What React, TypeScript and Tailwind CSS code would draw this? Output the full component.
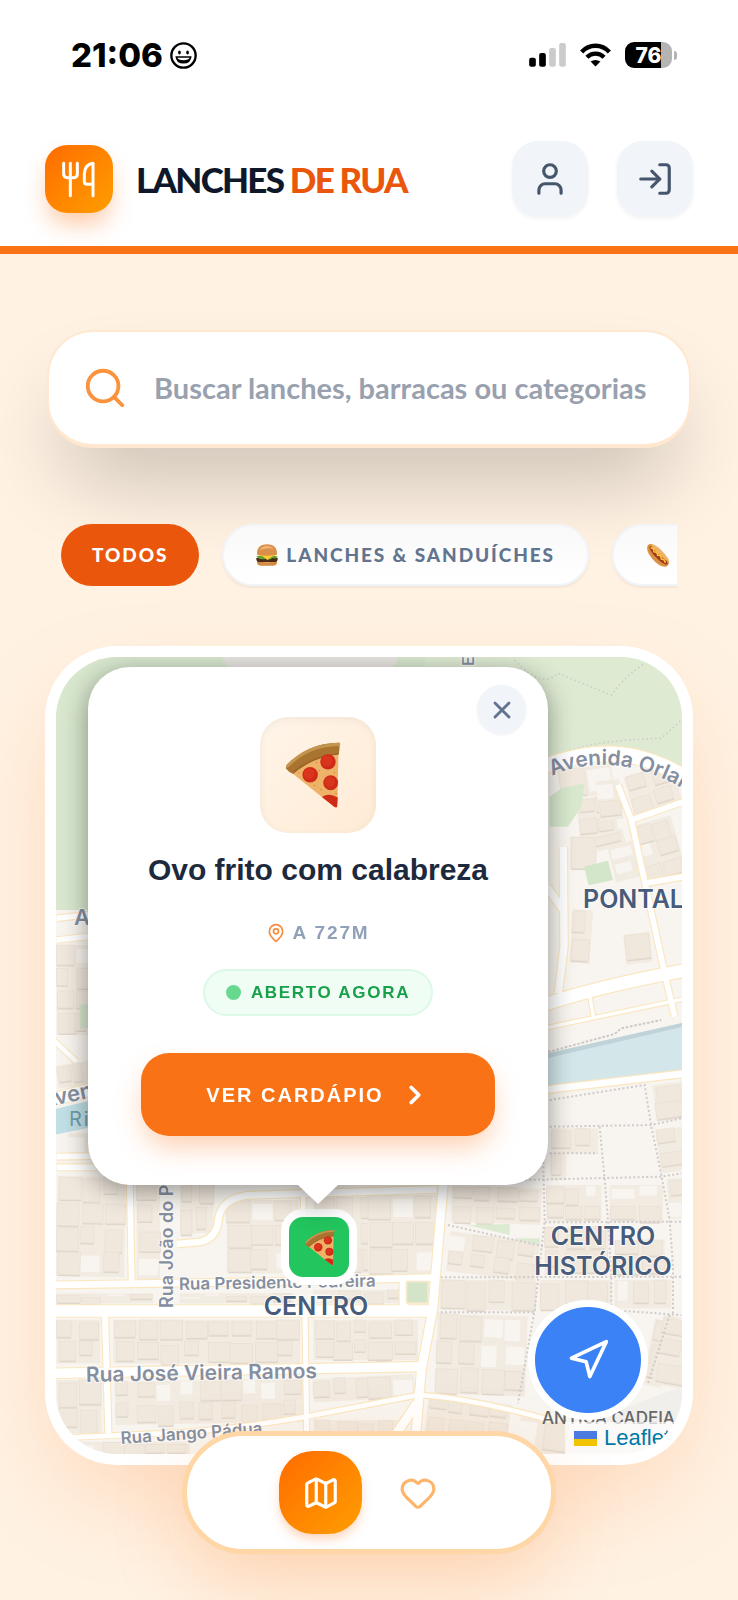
import { ChevronRight, Heart, LogIn, Map as MapIcon, MapPin, Navigation, Search, User, X } from 'lucide-react';

const categories = [
  { label: 'Todos', active: true },
  { label: 'Lanches & Sanduíches', icon: <Burger /> },
  { label: 'Hot Dogs', icon: <HotDog /> },
];

function Pizza({ className }: { className: string }) {
  return (
    <svg viewBox="136 188 168 202" className={className} aria-hidden="true">
      <path d="M160 284 Q216 232 297 222 L294 384 Q288 388 281 381 Z" fill="#eeb268" />
      <path d="M140 268 Q202 192 300 193 Q302 208 298 228 Q220 236 163 286 Q148 280 140 268Z" fill="#a8742f" />
      <path d="M146 262 Q206 200 298 198" fill="none" stroke="#c4954f" strokeWidth="9" strokeLinecap="round" />
      <path d="M164 280 Q220 234 297 226" fill="none" stroke="#9a5c28" strokeWidth="3" />
      <g fill="#cf2a17">
        <circle cx="266" cy="250" r="23" />
        <circle cx="213" cy="288" r="23" />
        <circle cx="274" cy="312" r="22" />
        <path d="M248 354 Q270 340 295 356 L293 383 Q288 387 282 381Z" />
      </g>
      <g fill="#d9351d">
        <circle cx="263" cy="247" r="16" />
        <circle cx="210" cy="285" r="16" />
        <circle cx="272" cy="309" r="15" />
      </g>
      <g fill="#c98238">
        <circle cx="232" cy="252" r="2" />
        <circle cx="240" cy="276" r="2" />
        <circle cx="226" cy="320" r="2" />
        <circle cx="246" cy="332" r="2" />
        <circle cx="180" cy="282" r="2" />
        <circle cx="285" cy="282" r="2" />
        <circle cx="290" cy="344" r="2" />
      </g>
    </svg>
  );
}

function Burger() {
  return (
    <svg viewBox="0 0 66 66" className="size-[22px] shrink-0" aria-hidden="true">
      <path d="M3 50 Q33 60 63 50 V56 Q62 65 50 65 H16 Q4 65 3 56Z" fill="#d48a3f" />
      <path d="M1 42 Q33 36 65 42 Q66 52 58 54 H8 Q0 52 1 42Z" fill="#4b2a18" />
      <path d="M1 38 Q10 33 33 34 T65 38 Q60 46 50 42 Q40 50 30 44 Q14 50 1 38Z" fill="#5fa02e" />
      <path d="M3 32 H63 L48 38 L34 48 L22 38Z" fill="#ffcc2e" />
      <path d="M3 32 Q1 2 33 1 Q65 2 63 32 Q33 38 3 32Z" fill="#dc8f4b" />
      <path d="M12 18 Q18 6 33 6 Q46 6 52 14 Q34 10 12 18Z" fill="#efb47a" />
    </svg>
  );
}

function HotDog() {
  return (
    <svg viewBox="0 0 66 66" className="size-[24px] shrink-0" aria-hidden="true">
      <path d="M5 6 Q14 -2 24 8 L62 48 Q66 60 54 65 Q36 66 18 44 Q-2 22 5 6Z" fill="#d99040" />
      <path d="M14 2 Q36 6 62 44 Q64 52 58 54 Q30 40 14 2Z" fill="#edb266" />
      <path d="M9 9 Q16 8 22 18 Q38 36 56 48 Q62 54 57 60 Q44 58 26 38 Q10 22 9 9Z" fill="#a43a1c" />
      <path d="M14 14 q8 0 8 10 q10 0 10 10 q10 -2 10 10 q9 -1 11 9" fill="none" stroke="#ffc936" strokeWidth="4" strokeLinecap="round" />
    </svg>
  );
}

function CutleryLogo() {
  return (
    <svg
      viewBox="95 385 108 120"
      className="h-[40px] w-[36px]"
      fill="none"
      stroke="white"
      strokeWidth="9"
      strokeLinecap="round"
      strokeLinejoin="round"
      aria-hidden="true"
    >
      <path d="M103 398 V430 Q103 441 114 441 H133 Q144 441 144 430 V398" />
      <path d="M123 398 V495" />
      <path d="M191 495 V398 Q166 402 165 430 V452 Q165 461 174 461 H190" />
    </svg>
  );
}

function StatusBar() {
  return (
    <div className="flex h-[110px] items-center justify-between bg-white pr-[61px] pl-[71px] font-[Inter,sans-serif] text-black">
      <div className="flex items-center gap-[7px]">
        <span className="text-[33px] leading-8 font-extrabold">21:06</span>
        <svg viewBox="0 0 80 80" className="size-[27px]" aria-hidden="true">
          <circle cx="40" cy="40" r="36" fill="none" stroke="black" strokeWidth="7" />
          <ellipse cx="28" cy="31" rx="4" ry="6" />
          <ellipse cx="52" cy="31" rx="4" ry="6" />
          <path d="M16 42 H64 Q62 64 40 64 Q18 64 16 42Z" />
          <path d="M22 47 H58 Q56 54 40 54 Q24 54 22 47Z" fill="white" />
        </svg>
      </div>
      <div className="flex items-center gap-[14px]">
        <svg viewBox="0 0 110 72" className="h-[24px] w-[37px]" aria-hidden="true">
          <rect x="0" y="44" width="20" height="27" rx="6" />
          <rect x="30" y="30" width="20" height="41" rx="6" />
          <rect x="60" y="15" width="20" height="56" rx="6" fill="#cbcbcb" />
          <rect x="90" y="0" width="20" height="71" rx="6" fill="#cbcbcb" />
        </svg>
        <svg viewBox="0 0 94 72" className="h-[24px] w-[31px]" aria-hidden="true">
          <g fill="none" stroke="black" strokeWidth="13">
            <path d="M5 27 Q22 8 47 8 Q72 8 89 27" />
            <path d="M21 43 Q32 32 47 32 Q62 32 73 43" />
          </g>
          <path d="M32 56 Q47 46 62 56 L47 71Z" />
        </svg>
        <div className="flex items-center gap-[2px]">
          <div className="flex h-[26px] w-[47px] items-center justify-center rounded-[9px] bg-linear-to-r from-black from-77% to-[#b4b4b4] to-77% text-[21px] leading-none font-extrabold text-white">
            76
          </div>
          <div className="h-[9px] w-[3px] rounded-r-full bg-[#b4b4b4]" />
        </div>
      </div>
    </div>
  );
}

function Header() {
  const button =
    'flex size-[76px] items-center justify-center rounded-[26px] bg-slate-100 text-slate-600 shadow-[0_2px_4px_rgba(0,0,0,0.05)]';
  return (
    <header className="flex items-center justify-between border-b-8 border-[#f97316] bg-white px-[45px] pt-[31px] pb-[29px]">
      <a href="#" className="flex items-center gap-[23px]">
        <span className="flex size-[68px] items-center justify-center rounded-[22px] bg-linear-to-br from-[#ff6b00] to-[#ff9d00] shadow-[0_14px_24px_-4px_rgba(249,115,22,0.4)]">
          <CutleryLogo />
        </span>
        <span className="text-[35px] leading-none font-black tracking-tighter text-slate-900">
          LANCHES <span className="text-[#e9560c]">DE RUA</span>
        </span>
      </a>
      <div className="flex gap-[29px]">
        <button type="button" aria-label="Perfil" className={button}>
          <User size={38} />
        </button>
        <button type="button" aria-label="Entrar" className={button}>
          <LogIn size={38} />
        </button>
      </div>
    </header>
  );
}

function SearchBox() {
  return (
    <label className="mx-[47px] flex h-[118px] items-center gap-[26px] rounded-[46px] border-x-2 border-t-2 border-b-4 border-[#ffe8cf] bg-white pr-[37px] pl-[33px] shadow-[0_46px_84px_-20px_rgba(0,0,0,0.24)]">
      <Search size={46} className="shrink-0 text-[#fb923c]" />
      <input
        type="text"
        aria-label="Buscar"
        placeholder="Buscar lanches, barracas ou categorias"
        className="min-w-0 flex-1 bg-transparent text-[29px] font-bold text-slate-800 outline-none placeholder:text-gray-400"
      />
    </label>
  );
}

function Categories() {
  return (
    <div className="mx-[61px] mt-[74px] flex gap-[23px] overflow-hidden py-[2px]">
      {categories.map(({ label, icon, active }) => (
        <button
          key={label}
          type="button"
          className={`flex h-[62px] shrink-0 items-center gap-2 rounded-full text-[19px] font-black tracking-widest whitespace-nowrap uppercase ${
            active
              ? 'bg-[#e9560c] px-[31px] text-white'
              : 'border-2 border-slate-100 bg-linear-to-b from-[#f9f9f9] to-white px-[32px] text-slate-500 shadow-[0_2px_3px_rgba(0,0,0,0.06)]'
          }`}
        >
          {icon}
          {label}
        </button>
      ))}
    </div>
  );
}

// x, y, width, height, tilt, in thirds of a pixel like the roads below
const blocks: number[][] = [
  [80, 975, 110, 270, 0],
  [575, 440, 160, 90, -8],
  [630, 530, 115, 120, -6],
  [690, 480, 70, 120, -6],
  [605, 650, 75, 100, 0],
  [680, 635, 90, 50, -14],
  [780, 450, 150, 115, -16],
  [805, 600, 130, 180, -16],
  [730, 670, 75, 110, -14],
  [610, 870, 60, 160, 4],
  [770, 940, 80, 90, -6],
  [80, 1330, 100, 70, -8],
  [115, 1540, 70, 60, 0],
  [80, 1670, 205, 300, 1],
  [320, 1680, 70, 300, 0],
  [450, 1680, 100, 160, 0],
  [590, 1740, 215, 220, 0],
  [850, 1730, 350, 230, 0],
  [80, 2020, 290, 30, 0],
  [450, 2020, 340, 30, 0],
  [850, 2010, 290, 40, 0],
  [80, 2100, 130, 130, 0],
  [250, 2100, 560, 130, 0],
  [850, 2100, 300, 120, 0],
  [80, 2280, 135, 160, 0],
  [255, 2280, 565, 130, -1],
  [850, 2270, 300, 70, -3],
  [850, 2400, 260, 90, 0],
  [80, 2465, 400, 50, 0],
];

const eastBlocks: number[][] = [
  [0, 525, 210, 240, 0],
  [250, 500, 270, 110, 2],
  [240, 650, 270, 120, 7],
  [215, 780, 290, 90, 1],
  [550, 325, 140, 75, 1],
  [545, 400, 50, 80, 0],
  [535, 495, 165, 110, 0],
  [725, 495, 160, 110, 0],
  [530, 620, 190, 145, 0],
  [740, 660, 150, 110, 0],
  [860, 190, 90, 110, -8],
  [870, 325, 80, 130, -8],
  [900, 475, 60, 120, -4],
  [515, 780, 215, 85, 0],
  [740, 780, 170, 85, 0],
  [0, 900, 150, 120, 0],
  [205, 885, 270, 240, 2],
  [0, 1070, 140, 70, -3],
  [175, 1140, 250, 110, 7],
  [450, 1200, 150, 100, 8],
  [840, 900, 60, 200, 12],
  [870, 890, 90, 210, 10],
];

function Buildings({ items }: { items: number[][] }) {
  return (
    <>
      {items.map(([x, y, w, h, tilt], b) => {
        const cols = Math.max(1, Math.round(w / 66));
        const rows = Math.max(1, Math.round(h / 72));
        return (
          <g key={b} transform={`rotate(${tilt} ${x + w / 2} ${y + h / 2})`}>
            <rect x={x} y={y} width={w} height={h} fill="#f2ebe1" />
            {Array.from({ length: cols * rows }, (_, i) => {
              const n = (i * 37 + b * 53 + i * i * 11) % 17;
              const cw = w / cols;
              const ch = h / rows;
              const bx = x + (i % cols) * cw + (n % 4) * 3;
              const by = y + Math.floor(i / cols) * ch + (n % 5) * 3;
              const bw = cw - 2 - (n % 6) * 5;
              const bh = ch - 8 - (n % 3) * 9;
              if (n === 4 || n === 11 || n === 14) {
                return <rect key={i} x={bx} y={by} width={bw} height={bh} fill="#f8f5f0" />;
              }
              return (
                <g key={i}>
                  <path d={`M${bx} ${by + bh} h${bw} v5 h${-bw}z`} fill="#e0d7cc" />
                  <rect x={bx} y={by} width={bw} height={bh} fill="#f0e8dd" stroke="#e8dfd3" strokeWidth="2" />
                </g>
              );
            })}
          </g>
        );
      })}
    </>
  );
}

const roads = [
  { d: 'M80 895 L190 882 M80 960 L190 948', w: 16 },
  { d: 'M70 1260 L140 1325', w: 14 },
  { d: 'M70 1438 L200 1404', w: 36 },
  { d: 'M80 1610 L200 1608 M80 1642 L200 1642', w: 17 },
  { d: 'M298 1600 L305 1990', w: 17 },
  { d: 'M440 1872 L510 1866 Q560 1855 565 1800 Q572 1738 650 1726 L1220 1708', w: 20 },
  { d: 'M820 1710 V1990', w: 14 },
  { d: 'M70 1995 L720 1985 L1215 1973', w: 20 },
  { d: 'M70 2073 L1210 2073', w: 34 },
  { d: 'M225 2080 L235 2440', w: 18 },
  { d: 'M825 2080 L830 2440', w: 15 },
  { d: 'M70 2260 L1175 2240', w: 28 },
  { d: 'M130 2452 L400 2440 Q600 2430 830 2390 L1164 2325 Q1300 2330 1560 2400', w: 14 },
  { d: 'M1240 1690 L1208 2070 L1174 2250 L1158 2440 M1160 2350 L1100 2440 M1122 1975 V2070', w: 26 },
  { d: 'M1540 440 Q1720 375 1850 420 Q1930 445 1980 485', w: 44 },
  { d: 'M1764 495 L1804 600 L1904 1060 L1934 1190 M1804 600 L1960 545 M1846 790 L1960 770', w: 17 },
  { d: 'M1600 680 L1602 980 L1585 1120 M1550 800 L1600 870', w: 22 },
  { d: 'M1540 1155 Q1700 1100 1970 1050', w: 38 },
  { d: 'M1540 1225 L1970 1135 M1680 1130 L1690 1190', w: 10 },
  { d: 'M1540 1410 L1970 1360', w: 20 },
];

const footpaths = [
  'M250 485 L880 470 L940 460',
  'M545 240 L830 195 L850 320 L880 465 L905 600 L915 740 L915 880',
  'M545 320 L850 315 L940 295',
  'M695 320 L710 480 L720 600 L730 770 L730 860',
  'M545 400 H690 M525 400 L530 600 L500 870 L450 1150',
  'M240 615 L530 680 M530 607 L940 605',
  'M205 772 L940 770 M205 877 H500 M730 870 L940 885',
  'M905 885 L840 1090',
];

function StreetMap() {
  return (
    <svg
      viewBox="0 0 626 797"
      preserveAspectRatio="xMidYMid slice"
      className="absolute inset-0 size-full"
      fontFamily="Inter, sans-serif"
      role="img"
      aria-label="Mapa"
    >
      <defs>
        <path id="avenida" d="M496 119 Q568 86 655 150" />
      </defs>
      <rect width="626" height="797" fill="#f8f5f0" />
      <g transform="translate(-26 -37) scale(0.33333)">
        <Buildings items={blocks.filter((b) => b[1] > 860 && b[0] < 560)} />
        <Buildings items={blocks.filter((b) => b[1] > 1700 && b[0] >= 560)} />
        <path d="M70 100 H1700 V870 H70Z" fill="#d8e7ce" />
        <path d="M570 100 H1108 L1088 150 H598Z" fill="#e8e5e1" />
        <path d="M1322 100 V150" stroke="#efece4" strokeWidth="22" />
        <path d="M70 1468 L190 1440 V1520 L70 1545Z" fill="#c0e0e5" />
        <path d="M150 1155 L190 1150 V1220 L150 1228Z" fill="#d8e7ce" />
      </g>
      <g transform="translate(312 -37) scale(0.33333)">
        <path d="M170 380 H950 V1300 H170Z" fill="#f8f5f0" />
        <Buildings items={blocks.filter((b) => b[1] <= 1100 && b[0] >= 560)} />
        <path d="M170 100 H950 V465 Q860 395 740 385 Q640 380 545 415 H170Z" fill="#deebd2" />
        <path d="M545 530 L580 505 L650 490 L640 560 L600 620 H545Z" fill="#d7e8cc" />
        <path d="M648 740 L720 722 L735 780 L662 796Z" fill="#d3e6c9" />
        <path
          d="M440 120 Q520 210 570 160 L730 225 Q770 170 830 130 M580 400 Q680 360 880 355 L940 300"
          fill="none"
          stroke="#cbd0cb"
          strokeWidth="5"
          strokeDasharray="5 8"
        />
      </g>
      <g transform="translate(312 363) scale(0.33333)">
        <Buildings items={eastBlocks} />
        <path d="M540 100 L945 8 V150 L540 200Z" fill="#d3e6ea" />
        <path d="M540 100 L945 8 V20 L540 114Z" fill="#bfd3d8" />
        <path d="M540 96 L740 42 L760 25 L880 0" fill="none" stroke="#cdc8c6" strokeWidth="6" strokeDasharray="8 5" />
        <path d="M300 616 L425 612 V645Z M440 655 H515 V675Z" fill="#dcead1" />
        <path d="M830 1140 L945 1100 V1300 H600 V1240Z" fill="#f1efeb" />
        <g fill="none" stroke="#cfcbcb" strokeWidth="6" strokeDasharray="6 7">
          {footpaths.map((d) => (
            <path key={d} d={d} />
          ))}
        </g>
      </g>
      <g transform="translate(-26 -37) scale(0.33333)" fill="none" strokeLinejoin="round">
        {roads.map(({ d, w }) => (
          <path key={d} d={d} stroke="#fae7c0" strokeWidth={w + 7} />
        ))}
        {roads.map(({ d, w }) => (
          <path key={d} d={d} stroke="white" strokeWidth={w} />
        ))}
        <rect x="1130" y="1985" width="64" height="64" fill="#d3e4c8" stroke="#f7e8c8" strokeWidth="5" />
      </g>

      <g fill="#868fa0" stroke="white" strokeWidth="2" strokeOpacity="0.7" paintOrder="stroke" fontWeight="600">
        <text fontSize="21">
          <textPath href="#avenida">Avenida Orlando</textPath>
        </text>
        <text x="18" y="268" fontSize="22">A</text>
        <text fontSize="22" transform="translate(-14 451) rotate(-12)">Avenida</text>
        <text fontSize="18" transform="translate(117 651) rotate(-90)">Rua João do Prado</text>
        <text fontSize="17" transform="translate(123 633) rotate(-1)">Rua Presidente Pedreira</text>
        <text fontSize="21" transform="translate(30 725) rotate(-1)">Rua José Vieira Ramos</text>
        <text fontSize="17" transform="translate(65 787) rotate(-4)">Rua Jango Pádua</text>
        <text fontSize="16" transform="translate(418 9) rotate(-90)">E</text>
      </g>
      <text x="13" y="469" fontSize="20" fill="#6d9dac" letterSpacing="2">Rio</text>
      <g
        fill="#475b7a"
        stroke="white"
        strokeWidth="2"
        strokeOpacity="0.7"
        paintOrder="stroke"
        fontWeight="600"
        fontSize="25"
      >
        <text x="527" y="251">PONTAL</text>
        <text x="260" y="658" textAnchor="middle">CENTRO</text>
        <text x="547" y="588" textAnchor="middle">CENTRO</text>
        <text x="547" y="618" textAnchor="middle">HISTÓRICO</text>
      </g>
      <text x="486" y="767" fontSize="17" fontWeight="500" fill="#666">ANTIGA CADEIA</text>
    </svg>
  );
}

function VendorPopup() {
  return (
    <div
      role="dialog"
      aria-label="Ovo frito com calabreza"
      className="absolute top-[10px] left-[32px] w-[460px] font-['Liberation_Sans',Arial,sans-serif] drop-shadow-[0_6px_13px_rgba(0,0,0,0.4)]"
    >
      <div className="relative flex flex-col items-center rounded-[42px] bg-white px-[53px] pt-[50px] pb-[49px]">
        <button
          type="button"
          aria-label="Fechar"
          className="absolute top-[18px] right-[22px] flex size-[49px] items-center justify-center rounded-full bg-slate-100 text-slate-500 shadow-[0_1px_3px_rgba(0,0,0,0.06)]"
        >
          <X size={28} strokeWidth={2.5} />
        </button>
        <div className="flex size-[116px] items-center justify-center rounded-[28px] bg-linear-to-br from-[#fff5ea] to-[#ffebd5] pr-3 shadow-[inset_0_2px_8px_rgba(0,0,0,0.06)]">
          <Pizza className="h-[68px] w-[57px]" />
        </div>
        <h2 className="mt-[19px] text-[30px] leading-9 font-bold whitespace-nowrap text-slate-800">
          Ovo frito com calabreza
        </h2>
        <p className="mt-[33px] flex h-6 items-center gap-[6px] text-[19px] font-bold tracking-widest text-slate-400">
          <MapPin size={20} className="text-[#f98b3c]" />A 727M
        </p>
        <p className="mt-6 flex h-[47px] items-center gap-[10px] rounded-full border-2 border-[#dcf8e6] bg-[#effdf4] px-[21px] text-[17px] font-bold tracking-widest text-[#18a04b]">
          <span className="size-[15px] rounded-full bg-[#66d98e]" />
          ABERTO AGORA
        </p>
        <button
          type="button"
          className="mt-[37px] flex h-[83px] w-full items-center justify-center gap-[16px] rounded-[28px] bg-[#f97316] text-[20px] font-bold tracking-widest text-white shadow-[0_14px_28px_-4px_rgba(249,115,22,0.35)]"
        >
          VER CARDÁPIO
          <ChevronRight size={30} strokeWidth={3} />
        </button>
      </div>
      <svg viewBox="0 0 40 20" className="mx-auto h-[20px] w-[40px]" aria-hidden="true">
        <path d="M0 0 H40 L20 19Z" fill="white" />
      </svg>
    </div>
  );
}

function MapCard() {
  return (
    <section className="mx-[45px] mt-[58px] rounded-[72px] bg-white p-[11px] shadow-[0_40px_100px_-16px_rgba(249,115,22,0.22)]">
      <div className="relative h-[797px] overflow-hidden rounded-[61px]">
        <StreetMap />
        <button
          type="button"
          aria-label="Ovo frito com calabreza"
          className="absolute top-[552px] left-[225px] flex size-[76px] items-center justify-center rounded-[22px] border-8 border-white bg-[#22c55e]"
        >
          <Pizza className="h-[37px] w-[31px]" />
        </button>
        <VendorPopup />
        <p className="absolute right-0 bottom-0 flex items-center gap-[7px] bg-white/70 pr-[12px] pl-[9px] font-['Liberation_Sans',Arial,sans-serif] text-[22px] leading-8">
          <svg viewBox="0 0 23 15" className="h-[15px] w-[23px]" aria-hidden="true">
            <path d="M0 0h23v8H0z" fill="#4c7be1" />
            <path d="M0 8h23v7H0z" fill="#f2c500" />
          </svg>
          <a href="#" className="text-[#0078a8]">
            Leaflet
          </a>
        </p>
        <button
          type="button"
          aria-label="Minha localização"
          className="absolute right-[34px] bottom-[34px] flex size-[120px] items-center justify-center rounded-full border-[7px] border-white bg-[#3b82f6] text-white"
        >
          <Navigation size={44} />
        </button>
      </div>
    </section>
  );
}

function BottomNav() {
  return (
    <nav className="fixed bottom-[46px] left-1/2 flex h-[123px] w-[374px] -translate-x-1/2 items-center justify-center gap-[14px] rounded-full border-5 border-[#ffd6a5] bg-white shadow-[0_30px_80px_-8px_rgba(249,115,22,0.25)]">
      <button
        type="button"
        aria-label="Mapa"
        className="flex size-[83px] items-center justify-center rounded-[34px] bg-linear-to-br from-[#ff6b00] to-[#ff9d00] text-white shadow-[0_6px_12px_-2px_rgba(249,115,22,0.35)]"
      >
        <MapIcon size={38} />
      </button>
      <button type="button" aria-label="Favoritos" className="flex size-[83px] items-center justify-center text-[#fdb56b]">
        <Heart size={38} />
      </button>
    </nav>
  );
}

export default function App() {
  return (
    <div className="min-h-screen overflow-x-hidden bg-[#fff2e3] font-[Lato,sans-serif]">
      <StatusBar />
      <Header />
      <main className="pt-[76px] pb-[135px]">
        <SearchBox />
        <Categories />
        <MapCard />
      </main>
      <BottomNav />
    </div>
  );
}
